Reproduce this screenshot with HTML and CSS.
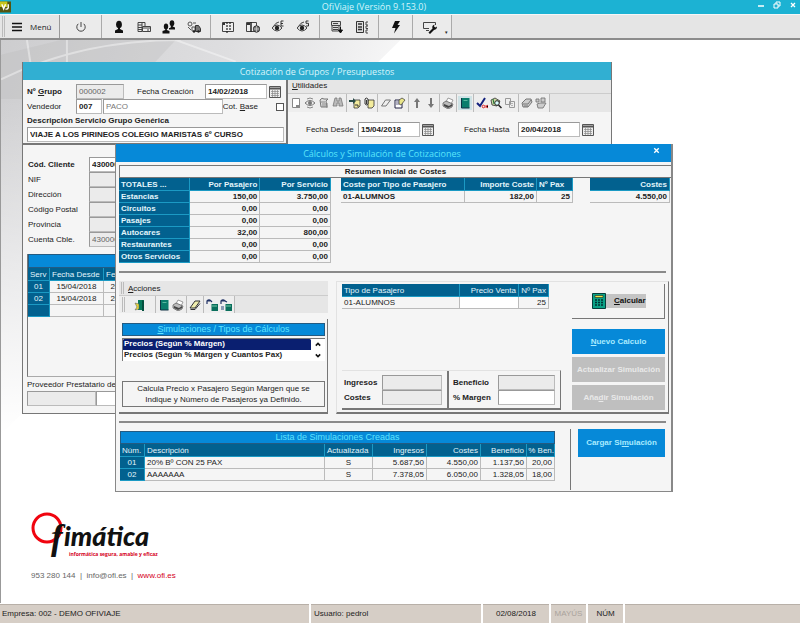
FILE: index.html
```html
<!DOCTYPE html>
<html lang="es">
<head>
<meta charset="utf-8">
<meta name="viewport" content="width=device-width, initial-scale=1">
<title>OfiViaje (Versión 9.153.0)</title>
<link rel="stylesheet" href="styles.css">
</head>
<body>
<svg class="defs" aria-hidden="true">
  <symbol id="calendar" viewBox="0 0 12 12"><path d="M.5.5h11v11H.5z" fill="#eee" stroke="#555"/><path d="M1 2.500h10" stroke="#555" stroke-width="2"/><path d="M2 5.500h8M2 7.500h8M2 9.500h8M3.500 4v7M6 4v7M8.500 4v7" stroke="#888" stroke-width=".7"/></symbol>
  <symbol id="door" viewBox="0 0 12 12"><path d="M4 1h6v10H4z" fill="#087a5c"/><path d="M8 1l2 1v10H8z" fill="#04503e"/><path d="M1 4l4 1v5l-4 1 2-3z" fill="#e6d63c" stroke="#555" stroke-width=".5"/></symbol>
  <symbol id="book" viewBox="0 0 12 12"><path d="M2.500 1h8v10h-8z" fill="#0a7d6c"/><path d="M2.500 1v10h8" fill="none" stroke="#134" /><path d="M4.500 3h4v1h-4z" fill="#58b8a0"/></symbol>
  <symbol id="printer" viewBox="0 0 12 12"><path d="M4 5l2-4 5 2-2 4z" fill="#fff" stroke="#777" stroke-width=".7"/><path d="M1 6l3-2 7 3-1 3-4 2-5-3z" fill="#bbb" stroke="#555" stroke-width=".7"/><path d="M2 7l5 2 3-2v2l-4 2-4-2z" fill="#444"/></symbol>
  <symbol id="eraser" viewBox="0 0 12 12"><path d="M1 9l5-7h5L6 9z" fill="#f0eeaf" stroke="#333"/><path d="M1.500 10.500H6l5-6" fill="none" stroke="#333"/></symbol>
  <symbol id="eraser-off" viewBox="0 0 12 12"><path d="M1.500 9l4-6h5L6 9z" fill="#eee" stroke="#777"/></symbol>
  <symbol id="calc-add" viewBox="0 0 12 12"><path d="M5.500 5h6.500v7H5.500z" fill="#0a6f5c"/><path d="M1 5V2q2-2 4 0l1 1M1 2h3" fill="none" stroke="#236" stroke-width="1.200"/><path d="M6 7h5" stroke="#7ca"/></symbol>
  <symbol id="calc-list" viewBox="0 0 12 12"><path d="M5.500 5h6.500v7H5.500z" fill="#0a6f5c"/><path d="M1 5V2q2-2 4 0l2 1M1 2h5" fill="none" stroke="#236" stroke-width="1.200"/><path d="M1 7h3v4H1z" fill="#8b9bb5"/><path d="M6 7h5" stroke="#7ca"/></symbol>
  <symbol id="calculator" viewBox="0 0 14 16"><path d="M.5.5h13v15H.5z" fill="#0ba287" stroke="#063f3b"/><path d="M3 2.500h8v2H3z" fill="#eee84a" stroke="#222" stroke-width=".6"/><path d="M3 7h2m1 0h2m1 0h2M3 9.500h2m1 0h2m1 0h2M3 12h2m1 0h2m1 0h2" stroke="#033" stroke-width="1.500"/></symbol>
  <symbol id="page" viewBox="0 0 12 12"><path d="M2.500 1.500h7v9h-7z" fill="#fff" stroke="#888"/><path d="M6 8h4v3H6z" fill="#888"/></symbol>
  <symbol id="eye" viewBox="0 0 12 12"><path d="M1 6q5-5 10 0-5 5-10 0z" fill="#eee" stroke="#777"/><circle cx="6" cy="6" r="2" fill="#777"/><path d="M3 2l3-1 3 1M3 10l3 1 3-1" fill="none" stroke="#888"/></symbol>
  <symbol id="report" viewBox="0 0 12 12"><path d="M2 3q2-3 4-1h4L8 4l1 6H3z" fill="#ddd" stroke="#777"/><path d="M3 5h4M4 7h4M4 9h4M9 6v5" stroke="#888"/></symbol>
  <symbol id="binoculars" viewBox="0 0 12 12"><path d="M3 1h2v3h2V1h2l2 8H7V6H5v3H1z" fill="#bbb" stroke="#777" stroke-width=".8"/></symbol>
  <symbol id="note-in" viewBox="0 0 12 12"><path d="M5 3h6v6l-2 2H5z" fill="#f3ec9d" stroke="#333" stroke-width=".8"/><path d="M0 3h4V1l3 3-3 3V5H0z" fill="#294b47"/><path d="M6 8h3v2" fill="none" stroke="#333"/></symbol>
  <symbol id="note-clip" viewBox="0 0 12 12"><path d="M5 3h6v6l-2 2H5z" fill="#f3ec9d" stroke="#333" stroke-width=".8"/><path d="M2 7V2q1-2 3 0v5q-1 2-3 0zM3.500 3v4" fill="#eee" stroke="#222" stroke-width=".9"/></symbol>
  <symbol id="form-edit" viewBox="0 0 12 12"><path d="M1 3h7v8H1z" fill="#fff" stroke="#224"/><path d="M2 5h4M2 7h3" stroke="#668"/><path d="M5 3l3-2 3 2-4 5-2-1z" fill="#eae68a" stroke="#333" stroke-width=".7"/></symbol>
  <symbol id="arrow-up" viewBox="0 0 12 12"><path d="M6 1l3 4H7v6H5V5H3z" fill="#777"/></symbol>
  <symbol id="arrow-down" viewBox="0 0 12 12"><path d="M6 11l3-4H7V1H5v6H3z" fill="#777"/></symbol>
  <symbol id="check-ok" viewBox="0 0 12 12"><path d="M1 6l3 3 5-8" fill="none" stroke="#12207c" stroke-width="2"/><circle cx="7.500" cy="9.500" r="1.300" fill="none" stroke="#d22"/><path d="M10 8v3m2-3l-2 1.500L12 11" stroke="#d22" stroke-width=".8"/></symbol>
  <symbol id="search-book" viewBox="0 0 12 12"><path d="M1 3l4-2 5 3-3 5-5-1z" fill="#cbd6a2" stroke="#333" stroke-width=".8"/><circle cx="7" cy="6" r="2.300" fill="#dff" stroke="#222"/><path d="M8.500 8l3 3" stroke="#222" stroke-width="1.500"/><path d="M3 2l1 5" stroke="#273" /></symbol>
  <symbol id="copy" viewBox="0 0 12 12"><path d="M1.500 1.500h5v6h-5zM5.500 4.500h5v6h-5z" fill="#eee" stroke="#999"/><path d="M7 6.500h2M7 8.500h2" stroke="#999" stroke-width=".7"/></symbol>
  <symbol id="stack" viewBox="0 0 12 12"><path d="M1 6l4-4h5l1 3-4 5H2z" fill="#ccc" stroke="#777"/><path d="M2 7h5l3-4M3 9h4" fill="none" stroke="#777"/></symbol>
  <symbol id="stack-pair" viewBox="0 0 12 12"><path d="M1 2h3v3H1zM6 1h4v4H6zM2 7l3-1h6l-3 5H3z" fill="#ccc" stroke="#777" stroke-width=".9"/></symbol>
</svg>

<header class="titlebar">
  <svg class="app-icon" viewBox="0 0 12 12" aria-hidden="true"><path d="M0 0h12v12H0z" fill="#55540f"/><path d="M0 0h8v6H0z" fill="#c7c51d"/><path d="M2 3l2 5 2-5M9 3v4q-1 2-3 1" fill="none" stroke="#fff" stroke-width="1.500"/></svg>
  <h1>OfiViaje (Versión 9.153.0)</h1>
  <div class="window-controls">
    <button aria-label="Minimizar"><svg viewBox="0 0 8 8"><path d="M1 5h6" stroke="#fff" stroke-width="1.500"/></svg></button>
    <button aria-label="Restaurar"><svg viewBox="0 0 8 8"><path d="M1 3h4v4H1zM3 3V1h4v4H5" fill="none" stroke="#fff"/></svg></button>
    <button aria-label="Cerrar"><svg viewBox="0 0 8 8"><path d="M2 2l4 4m0-4L2 6" stroke="#fff" stroke-width="1.300"/></svg></button>
  </div>
</header>

<nav class="toolbar" aria-label="Principal">
  <span class="grip"></span>
  <button class="menu-button"><svg viewBox="0 0 12 12" aria-hidden="true"><path d="M1 2.500h10M1 6h10M1 9.500h10" stroke="#111" stroke-width="1.500"/></svg>Menú</button>
  <div class="tools tools-wide"><button aria-label="Salir"><svg viewBox="0 0 14 14"><path d="M4.300 3.800a4.200 4.200 0 1 0 5.400 0M7 2v5" fill="none" stroke="#444"/></svg></button></div>
  <div class="tools">
    <button aria-label="Clientes"><svg viewBox="0 0 14 14"><ellipse cx="7" cy="4.500" rx="2.900" ry="3.800" fill="#111"/><path d="M6 7h2v2l3 1.500V13H3v-2.500L6 9z" fill="#111"/></svg></button>
    <button aria-label="Pagos"><svg viewBox="0 0 14 14"><path d="M1 2.500h4v9H1zM1 5h4M1 7.500h4M1 9.500h4M5 2.500h3V6" fill="none" stroke="#444"/><path d="M5.500 6.500h8v5h-8z" fill="#eee" stroke="#444"/><path d="M6 8h7M10 10h2" stroke="#444"/></svg></button>
    <button aria-label="Grupos"><svg viewBox="0 0 14 14"><ellipse cx="10" cy="3.200" rx="2.300" ry="3" fill="#111"/><path d="M9.300 5h1.500v1.500L13 7.500V9H8zM7 8h6v1.500H7z" fill="#111"/><ellipse cx="4" cy="6.500" rx="2.200" ry="3" fill="#111"/><path d="M3.300 9h1.500v1l2.700 1v2.500H.500V11l2.800-1z" fill="#111"/></svg></button>
    <button aria-label="Transporte"><svg viewBox="0 0 14 14"><circle cx="3" cy="4" r="2" fill="none" stroke="#555"/><path d="M6 3h3M5 7h3v4H5zM1 7l3 3" fill="none" stroke="#555"/><path d="M8.500 5.500h3l2 3v3h-5z" fill="#777" stroke="#333"/><circle cx="7" cy="11.500" r="1.200" fill="#222"/><circle cx="11.500" cy="11.500" r="1.200" fill="#222"/></svg></button>
  </div>
  <div class="tools">
    <button aria-label="Folletos"><svg viewBox="0 0 14 14"><path d="M1.500 2.500h11v9h-11z" fill="#eee" stroke="#444"/><path d="M6 2v11M9 2v9" stroke="#222" stroke-width="1.200" stroke-dasharray="2 1"/><path d="M2 4h2" stroke="#333" stroke-width="2"/></svg></button>
    <button aria-label="Folletos web"><svg viewBox="0 0 14 14"><path d="M.5 2.500h10v9H.500z" fill="#eee" stroke="#444"/><path d="M5 2v10" stroke="#222" stroke-width="1.500"/><path d="M1 4h3" stroke="#333" stroke-width="2"/><circle cx="10.500" cy="9" r="3.200" fill="#777" stroke="#333"/><path d="M7.500 9h6M10.500 6v6" stroke="#ddd" stroke-width=".6"/></svg></button>
    <button aria-label="Ver entradas"><svg viewBox="0 0 14 14"><path d="M1 8q5-6 10 0-5 6-10 0zM2 7q3-5 6-5" fill="none" stroke="#444"/><circle cx="6" cy="8" r="2.200" fill="#222"/><path d="M12.500 1H10v5h2.500M10 3.500h2" fill="none" stroke="#222" stroke-width=".9"/></svg></button>
    <button aria-label="Ver salidas"><svg viewBox="0 0 14 14"><path d="M1 8q5-6 10 0-5 6-10 0zM2 7q3-5 6-5" fill="none" stroke="#444"/><circle cx="6" cy="8" r="2.200" fill="#222"/><path d="M12.500 1H10v2.300h2.500V6H10" fill="none" stroke="#222" stroke-width=".9"/></svg></button>
  </div>
  <div class="tools">
    <button aria-label="Facturar"><svg viewBox="0 0 14 14"><path d="M1.500 1.500h9v4h-9zM2 6v5h7V6M3 7.500h5M3 9.500h5" fill="#ddd" stroke="#444"/><path d="M3 3.500h5" stroke="#444"/><path d="M10.500 6.500v5M8.500 10l2 3 2-3z" fill="#111" stroke="#111"/></svg></button>
    <button aria-label="Calcular totales"><svg viewBox="0 0 14 14"><path d="M1.500 1.500h7v11h-7z" fill="#ddd" stroke="#333"/><path d="M3 4h4M3 7h4M3 9.500h4" stroke="#333" stroke-width="1.500"/><path d="M13 2h-2v3h2M13 6h-2v2.500h2M13 10h-2v3h2" fill="none" stroke="#444"/></svg></button>
  </div>
  <div class="tools"><button aria-label="Acceso rápido"><svg viewBox="0 0 14 14"><path d="M6 1h5L8.500 5H11L5 13.500l1.500-5.500H3z" fill="#111"/></svg></button></div>
  <div class="tools tools-last"><button aria-label="Configuración"><svg viewBox="0 0 14 14"><path d="M12.500 5V2.500H.5v6H6M3 10.500h3" fill="none" stroke="#444"/><path d="M5.500 12.500l4-4q-1-3 2-4l-.5 2 1.500 1 1.500-1q0 3-3 3.500l-4 4z" fill="#111"/></svg></button><span class="more">▾</span></div>
</nav>

<main class="desktop">
  <svg class="backdrop" viewBox="0 0 440 400" preserveAspectRatio="none" aria-hidden="true">
    <defs><linearGradient id="fade" x2="1" y2=".4"><stop stop-color="#cdcdcf"/><stop offset=".5" stop-color="#dedee0"/><stop offset="1" stop-color="#fff"/></linearGradient>
    <linearGradient id="fade-down" x2="0" y2="1"><stop stop-color="#fff" stop-opacity="0"/><stop offset="1" stop-color="#fff"/></linearGradient></defs>
    <path d="M0 0h400L340 60 0 400z" fill="url(#fade)"/>
    <path d="M175 0L120 60H0V15L60 0z" fill="#bbb" opacity=".3"/>
    <path d="M0 40Q80 0 180 0M26 0l6 40M66 0v60M175 0l60 22" fill="none" stroke="#fff" opacity=".4" stroke-width="2"/>
    <path d="M0 60h440v340H0z" fill="url(#fade-down)"/>
  </svg>

  <footer class="brand">
    <svg class="logo" viewBox="0 0 124 46" role="img" aria-label="Ofimática">
      <circle cx="16" cy="16" r="14" fill="none" stroke="#f0040f" stroke-width="3"/>
      <text class="logo-f" x="20" y="37">f</text>
      <text class="logo-name" x="33" y="34">imática</text>
      <text class="logo-claim" x="38" y="44">informática segura, amable y eficaz</text>
    </svg>
    <p>953 280 144 &nbsp;|&nbsp; info@ofi.es &nbsp;|&nbsp; <a href="#">www.ofi.es</a></p>
  </footer>

  <section class="window quote">
    <h2 class="quote-title">Cotización de Grupos / Presupuestos</h2>
    <div class="quote-head">
      <form class="group-form">
        <div class="line">
          <label class="key strong" for="grupo">Nº <u>G</u>rupo</label>
          <input class="off w-code" id="grupo" value="000002">
          <label class="created" for="creacion">Fecha Creación</label>
          <input class="strong w-date" id="creacion" value="14/02/2018">
          <button class="cal" type="button" aria-label="Elegir fecha"><svg><use href="#calendar"/></svg></button>
        </div>
        <div class="line">
          <label class="key" for="vendedor">Vendedor</label>
          <input class="strong w-short" id="vendedor" value="007">
          <input class="dim grow" aria-label="Nombre del vendedor" value="PACO">
          <label for="base">Cot. <u>B</u>ase</label>
          <input type="checkbox" id="base">
        </div>
        <label class="strong caption" for="descripcion">Descripción Servicio Grupo Genérica</label>
        <input class="strong" id="descripcion" value="VIAJE A LOS PIRINEOS COLEGIO MARISTAS 6º CURSO">
      </form>
      <div class="utilities">
        <div class="bar"><u>U</u>tilidades</div>
        <div class="icons">
          <span><button aria-label="Nuevo"><svg><use href="#page"/></svg></button><button aria-label="Ver"><svg><use href="#eye"/></svg></button><button aria-label="Informe"><svg><use href="#report"/></svg></button><button aria-label="Buscar"><svg><use href="#binoculars"/></svg></button></span>
          <span><button aria-label="Nota"><svg><use href="#note-in"/></svg></button><button aria-label="Adjuntar"><svg><use href="#note-clip"/></svg></button></span>
          <span><button aria-label="Borrar"><svg><use href="#eraser-off"/></svg></button><button aria-label="Editar"><svg><use href="#form-edit"/></svg></button></span>
          <span><button aria-label="Subir"><svg><use href="#arrow-up"/></svg></button><button aria-label="Bajar"><svg><use href="#arrow-down"/></svg></button></span>
          <span><button aria-label="Imprimir"><svg><use href="#printer"/></svg></button></span>
          <span><button class="pressed" aria-label="Cálculos"><svg><use href="#book"/></svg></button></span>
          <span><button aria-label="Confirmar"><svg><use href="#check-ok"/></svg></button><button aria-label="Consultar"><svg><use href="#search-book"/></svg></button><button aria-label="Copiar"><svg><use href="#copy"/></svg></button></span>
          <span><button aria-label="Documentos"><svg><use href="#stack"/></svg></button><button aria-label="Expedientes"><svg><use href="#stack-pair"/></svg></button></span>
        </div>
        <div class="dates">
          <label for="desde">Fecha Desde</label><input class="strong w-date" id="desde" value="15/04/2018"><button class="cal" aria-label="Elegir fecha desde"><svg><use href="#calendar"/></svg></button>
          <label class="until" for="hasta">Fecha Hasta</label><input class="strong w-date" id="hasta" value="20/04/2018"><button class="cal" aria-label="Elegir fecha hasta"><svg><use href="#calendar"/></svg></button>
        </div>
      </div>
    </div>
    <form class="client">
      <label class="strong" for="cliente">Cód. Cliente</label><input class="strong" id="cliente" value="4300001">
      <label for="nif">NIF</label><input class="off" id="nif">
      <label for="direccion">Dirección</label><input class="off" id="direccion">
      <label for="postal">Código Postal</label><input class="off" id="postal">
      <label for="provincia">Provincia</label><input class="off" id="provincia">
      <label for="cuenta">Cuenta Cble.</label><input class="off" id="cuenta" value="4300001">
    </form>
    <div class="services">
      <div class="services-band"></div>
      <table class="grid">
        <colgroup><col class="c-serv"><col class="c-from"><col class="c-from"><col></colgroup>
        <thead><tr><th>Serv</th><th>Fecha Desde</th><th>Fecha Hasta</th><th></th></tr></thead>
        <tbody>
          <tr><th class="mid">01</th><td class="mid">15/04/2018</td><td class="mid">20/04/2018</td><td></td></tr>
          <tr><th class="mid">02</th><td class="mid">15/04/2018</td><td class="mid">20/04/2018</td><td></td></tr>
          <tr><th></th><td></td><td></td><td></td></tr>
        </tbody>
      </table>
    </div>
    <form class="provider">
      <label for="proveedor">Proveedor Prestatario del Servicio</label>
      <div class="line"><input class="off w-provider" id="proveedor"><input class="grow" aria-label="Nombre del proveedor"></div>
    </form>
  </section>

  <section class="window calc">
    <header class="calc-title"><h2>Cálculos y Simulación de Cotizaciones</h2><button aria-label="Cerrar"><svg viewBox="0 0 8 8"><path d="M2 2l4 4m0-4L2 6" stroke="#fff" stroke-width="1.200"/></svg></button></header>
    <div class="calc-body">
      <h3 class="summary-title">Resumen Inicial de Costes</h3>
      <div class="summary">
        <table class="grid strong totals">
          <thead><tr><th>TOTALES ...</th><th class="num">Por Pasajero</th><th class="num">Por Servicio</th></tr></thead>
          <tbody>
            <tr><th>Estancias</th><td class="num">150,00</td><td class="num">3.750,00</td></tr>
            <tr><th>Circuitos</th><td class="num">0,00</td><td class="num">0,00</td></tr>
            <tr><th>Pasajes</th><td class="num">0,00</td><td class="num">0,00</td></tr>
            <tr><th>Autocares</th><td class="num">32,00</td><td class="num">800,00</td></tr>
            <tr><th>Restaurantes</th><td class="num">0,00</td><td class="num">0,00</td></tr>
            <tr><th>Otros Servicios</th><td class="num">0,00</td><td class="num">0,00</td></tr>
          </tbody>
        </table>
        <table class="grid strong by-type">
          <colgroup><col><col class="c-amount"><col class="c-pax"></colgroup>
          <thead><tr><th>Coste por Tipo de Pasajero</th><th class="num">Importe Coste</th><th>Nº Pax</th></tr></thead>
          <tbody><tr><td>01-ALUMNOS</td><td class="num">182,00</td><td class="num">25</td></tr></tbody>
        </table>
        <table class="grid strong costs">
          <thead><tr><th class="num">Costes</th></tr></thead>
          <tbody><tr><td class="num">4.550,00</td></tr></tbody>
        </table>
      </div>
      <hr>
      <div class="work">
        <div class="actions">
          <div class="bar gripped"><span class="grip"></span><span><u>A</u>cciones</span></div>
          <div class="icons gripped">
            <span><i class="grip"></i><button aria-label="Salir"><svg><use href="#door"/></svg></button></span>
            <span><button aria-label="Libro"><svg><use href="#book"/></svg></button><button aria-label="Imprimir"><svg><use href="#printer"/></svg></button></span>
            <span><button aria-label="Limpiar"><svg><use href="#eraser"/></svg></button></span>
            <span><button aria-label="Añadir cálculo"><svg><use href="#calc-add"/></svg></button><button aria-label="Lista de cálculos"><svg><use href="#calc-list"/></svg></button></span>
          </div>
          <div class="kinds">
            <label class="band" for="tipos"><u>S</u>imulaciones / Tipos de Cálculos</label>
            <div class="listbox">
              <select id="tipos" size="2">
                <option selected>Precios (Según % Márgen)</option>
                <option>Precios (Según % Márgen y Cuantos Pax)</option>
              </select>
              <svg class="arrows" viewBox="0 0 8 20" aria-hidden="true"><path d="M2 6l2-2 2 2M2 14l2 2 2-2" fill="none" stroke="#111" stroke-width="1.400"/></svg>
            </div>
            <p class="hint">Calcula Precio x Pasajero Según Margen que se<br>Indique y Número de Pasajeros ya Definido.</p>
          </div>
        </div>
        <div class="simulation">
          <div class="prices">
            <table class="grid">
              <colgroup><col><col class="c-price"><col class="c-units"></colgroup>
              <thead><tr><th>Tipo de Pasajero</th><th class="num">Precio Venta</th><th class="num">Nº Pax</th></tr></thead>
              <tbody><tr><td>01-ALUMNOS</td><td class="blank"></td><td class="num">25</td></tr></tbody>
            </table>
            <div class="results">
              <div class="pair"><label for="ingresos">Ingresos</label><input class="off" id="ingresos"><label for="costes">Costes</label><input class="off" id="costes"></div>
              <div class="pair"><label for="beneficio">Beneficio</label><input class="off" id="beneficio"><label for="margen">% Margen</label><input id="margen"></div>
            </div>
          </div>
          <div class="buttons">
            <button class="calculate"><svg><use href="#calculator"/></svg><span><u>C</u>alcular</span></button>
            <button class="primary"><u>N</u>uevo Calculo</button>
            <button class="primary" disabled>Actualizar Simulación</button>
            <button class="primary" disabled>Aña<u>d</u>ir Simulación</button>
          </div>
        </div>
      </div>
      <hr>
      <div class="saved">
        <div class="saved-list">
          <h3 class="band">Lista de Simulaciones Creadas</h3>
          <table class="grid">
            <colgroup><col class="c-num"><col><col class="c-updated"><col class="c-money"><col class="c-money"><col class="c-benefit"><col class="c-percent"></colgroup>
            <thead><tr><th>Núm.</th><th>Descripción</th><th>Actualizada</th><th class="num">Ingresos</th><th class="num">Costes</th><th class="num">Beneficio</th><th class="num tight">% Ben.</th></tr></thead>
            <tbody>
              <tr><th class="mid">01</th><td>20% Bº CON 25 PAX</td><td class="mid">S</td><td class="num">5.687,50</td><td class="num">4.550,00</td><td class="num">1.137,50</td><td class="num">20,00</td></tr>
              <tr><th class="mid">02</th><td>AAAAAAA</td><td class="mid">S</td><td class="num">7.378,05</td><td class="num">6.050,00</td><td class="num">1.328,05</td><td class="num">18,00</td></tr>
            </tbody>
          </table>
        </div>
        <div class="load"><button class="primary">Cargar Si<u>m</u>ulación</button></div>
      </div>
    </div>
  </section>
</main>

<footer class="status">
  <span class="company">Empresa: 002 - DEMO OFIVIAJE</span>
  <span class="user">Usuario: pedrol</span>
  <span class="date">02/08/2018</span>
  <span class="lock inactive">MAYÚS</span>
  <span class="lock">NÚM</span>
  <span class="rest"></span>
</footer>
</body>
</html>
```
FILE: styles.css
```css
:root {
  --blue: #0689d8;
  --navy: #02618f;
  --cyan: #5ee4ff;
  --panel: #f5f5f5;
}

* { box-sizing: border-box; }

body {
  margin: 0;
  min-height: 100vh;
  display: flex;
  flex-direction: column;
  background: #fff;
  color: #222;
  font: 8px/12px "Liberation Sans", Arial, sans-serif;
}

h1, h2, h3, p, hr { margin: 0; }
button, input, select { font: inherit; color: inherit; }
button { padding: 0; border: 0; background: none; }
svg { display: block; }
.defs { position: absolute; width: 0; height: 0; }
.strong { font-weight: bold; }

/* Application title */
.titlebar {
  display: flex;
  align-items: center;
  height: 14px;
  background: #1cb2d3;
}
.titlebar h1 {
  flex: 1;
  padding-right: 20px;
  text-align: center;
  color: #d5f5fb;
  font: 9px/14px "Open Sans", sans-serif;
}
.app-icon { width: 11px; height: 12px; }
.window-controls { display: flex; gap: 8px; padding: 0 3px 4px 0; }
.window-controls svg { width: 8px; height: 8px; }

/* Main toolbar */
.toolbar {
  display: flex;
  height: 26px;
  background: #e5e5e5;
  border-top: 1px solid #f6f6f6;
  border-bottom: 2px solid #8c8c8c;
}
.grip {
  width: 3px;
  margin: 1px 2px;
  border-left: 1px solid #bbb;
  border-right: 1px solid #bbb;
}
.menu-button {
  display: flex;
  align-items: center;
  gap: 7px;
  width: 53px;
  padding-left: 4px;
  border-right: 1px solid #999;
  color: #222;
  font: 8px/12px "Open Sans", sans-serif;
}
.menu-button svg { width: 12px; height: 12px; }
.tools {
  display: flex;
  align-items: center;
  padding: 0 4px;
  border-right: 1px solid #aaa;
  background: #ebebeb;
}
.tools button { width: 25px; }
.tools svg { width: 14px; height: 14px; margin: auto; }
.tools-wide { padding: 0 8px; }
.tools-last { padding-right: 1px; }
.more { width: 8px; padding-top: 10px; font-size: 5px; text-align: center; }

/* Desktop */
.desktop {
  position: relative;
  flex: 1;
  display: flex;
  flex-direction: column;
  justify-content: flex-end;
  border-left: 1px solid #999;
  overflow: hidden;
}
.backdrop { position: absolute; top: 0; left: 0; width: 55%; height: 70%; }
.brand { padding: 0 30px 21px; }
.brand p { margin-top: 12px; color: #666; font-size: 8px; }
.brand a { color: #d5001c; text-decoration: none; }
.logo { width: 124px; height: 46px; overflow: visible; }
.logo-f { font: italic bold 35px "Liberation Serif", serif; fill: #111; }
.logo-name { font: italic 900 27px Lato, sans-serif; fill: #111; }
.logo-claim { font: bold 5px "Open Sans", sans-serif; fill: #d5001c; }

.window { position: absolute; background: var(--panel); }

/* Fields shared by both windows */
input {
  min-width: 0;
  height: 15px;
  padding: 0 2px;
  border: 1px solid #bbb;
  border-top-color: #999;
  border-left-color: #999;
  background: #fff;
  border-radius: 0;
}
input.off { background: #ebebeb; color: #666; }
input.dim { color: #777; }
input[type="checkbox"] { appearance: none; width: 8px; height: 8px; border-color: #555; padding: 0; margin: 0; }
.line { display: flex; align-items: center; }
.grow { flex: 1; }
.cal svg { width: 12px; height: 12px; }
.bar { height: 14px; padding-left: 4px; background: #e6e6e6; border-bottom: 1px solid #ccc; }
.icons { display: flex; height: 18px; background: #e6e6e6; }
.icons > span {
  display: flex;
  align-items: center;
  padding: 0 1px;
  border-right: 1px solid #bbb;
  background: #eee;
}
.icons button { width: 14px; height: 14px; }
.icons svg { width: 12px; height: 12px; margin: auto; }
.icons .pressed { background: #cfe3e6; }

/* Data grids */
.grid { width: 100%; table-layout: fixed; border-collapse: separate; border-spacing: 0; }
.grid th, .grid td {
  height: 12px;
  padding: 0 2px;
  line-height: 11px;
  text-align: left;
  font-weight: inherit;
  white-space: nowrap;
  overflow: hidden;
  border-right: 1px solid #bbb;
  border-bottom: 1px solid #bbb;
}
.grid th { background: var(--navy); color: #e3f5fb; border-color: #1b9ac4; }
.grid thead th { height: 13px; }
.grid .num { text-align: right; }
.grid .mid { text-align: center; }
.grid .tight { padding: 0; }
.band {
  display: block;
  height: 13px;
  border: 1px solid #235b82;
  background: var(--blue);
  color: var(--cyan);
  text-align: center;
  font: 9px/11px "Liberation Sans", Arial, sans-serif;
}

/* Group quote window */
.quote {
  top: 22px;
  left: 21px;
  right: 188px;
  height: 352px;
  border: 1px solid #777;
  border-top: 0;
}
.quote-title {
  height: 18px;
  background: #31afd2;
  color: #d9f5fb;
  text-align: center;
  font: 9px/19px "Open Sans", sans-serif;
}
.quote-head { display: flex; height: 65px; }
.group-form {
  display: flex;
  flex-direction: column;
  flex: 0 0 265px;
  padding: 4px 2px 1px 4px;
  border-right: 2px solid #777;
  border-bottom: 2px solid #777;
}
.group-form .key { width: 49px; }
.w-code { width: 48px; }
.w-date { width: 62px; }
.w-short { width: 26px; margin-right: 1px; }
.created { width: 81px; padding-left: 13px; }
.group-form .cal { margin-left: 2px; }
.group-form input[type="checkbox"] { margin-left: 18px; }
.caption { line-height: 13px; }
.utilities { flex: 1; }
.dates { display: flex; align-items: center; padding: 10px 0 0 18px; }
.dates label { width: 52px; }
.dates .cal { margin-left: 2px; }
.dates .until { margin-left: 30px; width: 54px; }
.client {
  display: grid;
  grid-template-columns: 61px 120px;
  align-items: center;
  padding: 12px 5px 0;
}
.services {
  margin: 7px 4px 0;
  height: 123px;
  border-left: 1px solid #777;
  border-bottom: 1px solid #aaa;
}
.services-band { height: 14px; background: var(--blue); border: 1px solid #235b82; }
.c-serv { width: 22px; }
.c-from { width: 54px; }
.provider { padding: 2px 4px; }
.provider .line { height: 14px; }
.w-provider { width: 69px; }

/* Calculation window */
.calc {
  top: 104px;
  left: 114px;
  right: 127px;
  border: 1px solid #888;
  border-top: 0;
  border-right: 2px solid #888;
}
.calc-title { display: flex; align-items: center; height: 18px; background: var(--blue); }
.calc-title h2 {
  flex: 1;
  padding-right: 4px;
  text-align: center;
  color: #5ce5fa;
  font: 9px/19px "Open Sans", sans-serif;
}
.calc-title svg { width: 9px; height: 9px; margin: 0 10px 5px 0; }
.calc-body { padding: 3px 0 1px 3px; }
.summary-title {
  height: 13px;
  border: 1px solid #777;
  border-right: 0;
  text-align: center;
  font: bold 8px/11px "Liberation Sans", Arial, sans-serif;
}
.summary { display: flex; align-items: flex-start; height: 93px; padding-right: 1px; }
.totals { width: 212px; }
.by-type { width: 232px; margin-left: 10px; }
.costs { width: auto; flex: 1; margin-left: 17px; }
.c-amount { width: 72px; }
.c-pax { width: 36px; }
.calc hr { height: 2px; margin-right: 5px; border: 0; background: #8a8a8a; }
.work { display: flex; gap: 8px; padding: 8px 2px 7px 0; height: 148px; }
.actions { flex: 0 0 209px; display: flex; flex-direction: column; }
.gripped { display: flex; padding-left: 0; }
.bar.gripped { height: 15px; gap: 2px; line-height: 15px; }
.actions .icons { height: 17px; }
.actions .icons > span:first-child { padding-right: 8px; }
.actions .icons > span:first-child button { margin-left: 6px; }
.actions .icons i { align-self: stretch; }
.kinds {
  flex: 1;
  display: flex;
  flex-direction: column;
  margin-top: 6px;
  padding: 4px 2px 5px 3px;
  border-right: 1px solid #777;
  border-bottom: 2px solid #777;
}
.listbox {
  display: flex;
  height: 23px;
  margin-top: 2px;
  border-top: 1px solid #777;
  border-left: 1px solid #777;
  background: #fff;
}
.listbox select {
  flex: 1;
  height: 22px;
  padding: 0;
  border: 0;
  outline: 0;
  overflow: hidden;
  background: #fff;
}
.listbox option {
  height: 11px;
  min-height: 11px;
  padding: 0 1px;
  font: bold 8px/11px "Liberation Sans", Arial, sans-serif;
}
.listbox option:checked { background: #0a1f70 linear-gradient(#0a1f70, #0a1f70); color: #fff; }
.arrows { width: 14px; height: 22px; }
.hint {
  margin-top: auto;
  border: 1px solid #777;
  padding: 1px 0;
  text-align: center;
  line-height: 11px;
}
.simulation {
  flex: 1;
  display: flex;
  gap: 11px;
  padding: 2px 3px 0 5px;
  border: 1px solid #e2e2e2;
  border-right: 1px solid #777;
  border-bottom: 2px solid #777;
}
.prices { flex: 1; display: flex; flex-direction: column; justify-content: space-between; padding-bottom: 2px; }
.prices .grid { width: 207px; }
.c-price { width: 59px; }
.c-units { width: 30px; }
.blank { background: #fff; }
.results { display: flex; border-bottom: 2px solid #777; border-right: 1px solid #777; border-top: 1px solid #e2e2e2; }
.pair {
  flex: 0 0 105px;
  display: grid;
  grid-template-columns: 38px 1fr;
  align-items: center;
  padding: 4px 5px 3px 2px;
  font-weight: bold;
}
.pair + .pair { flex: 1; grid-template-columns: 45px 1fr; padding-left: 4px; border-left: 2px solid #777; }
.buttons { display: flex; flex-direction: column; gap: 3px; flex: 0 0 93px; }
.primary {
  height: 25px;
  background: var(--blue);
  color: #a8ebff;
  font: bold 8px/12px "Liberation Sans", Arial, sans-serif;
  white-space: nowrap;
}
.primary:disabled { background: #bfbfbf; color: #e9e9e9; }
.calculate {
  display: flex;
  align-items: center;
  height: 35px;
  margin-bottom: 7px;
  padding-left: 20px;
  border-right: 1px solid #777;
  border-bottom: 1px solid #777;
  font-weight: bold;
}
.calculate svg { width: 14px; height: 16px; }
.calculate span { padding: 1px 0 1px 8px; background: #c4c4c4; color: #111; }
.saved { display: flex; padding-left: 1px; }
.saved-list { flex: 1; padding: 8px 15px 9px 0; }
.c-num { width: 25px; }
.c-updated { width: 48px; }
.c-money { width: 54px; }
.c-benefit { width: 46px; }
.c-percent { width: 28px; }
.load { flex: 0 0 101px; margin-top: 6px; padding-left: 7px; border-left: 1px solid #777; }
.load .primary { width: 87px; height: 28px; }

/* Status bar */
.status {
  display: flex;
  gap: 2px;
  height: 21px;
  padding: 1px 0;
  background: #fff;
}
.status span {
  padding: 0 2px;
  background: #d6cec6;
  border-top: 1px solid #b8b0a8;
  line-height: 18px;
}
.status .company { flex: 0 1 309px; }
.status .user { flex: 0 1 170px; padding-left: 3px; }
.status .date { flex: 0 0 66px; text-align: center; }
.status .lock { flex: 0 0 35px; text-align: center; }
.status .inactive { color: #aaa39c; }
.status .rest { flex: 1; }
```
